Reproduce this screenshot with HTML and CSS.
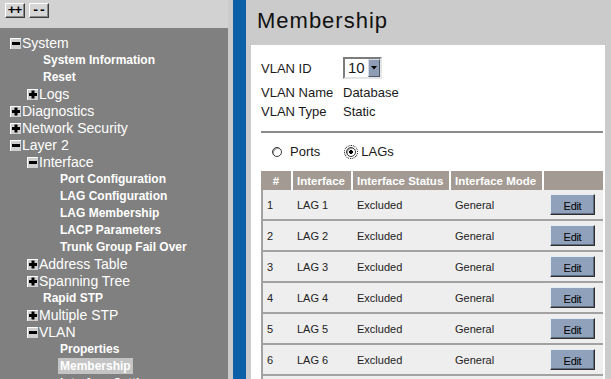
FILE: index.html
```html
<!DOCTYPE html>
<html>

<head>
  <title>Membership</title>
  <link rel="stylesheet" href="styles.css">
</head>

<body>
  <div class="frame">
    <div class="sidebar">
      <div class="toolbar">
        <button class="tool-btn">++</button>
        <button class="tool-btn">--</button>
      </div>
      <ul class="tree">
        <li class="node l0"><svg class="tog" width="11" height="11" viewBox="0 0 11 11"><rect width="11" height="11" fill="#cfcfcf"/><path d="M0.5 11V0.5H11" stroke="#fff" fill="none"/><rect x="2" y="4" width="8" height="3" fill="#000"/></svg>System</li>
        <li class="leaf l1">System Information</li>
        <li class="leaf l1">Reset</li>
        <li class="node l1"><svg class="tog" width="11" height="11" viewBox="0 0 11 11"><rect width="11" height="11" fill="#cfcfcf"/><path d="M0.5 11V0.5H11" stroke="#fff" fill="none"/><rect x="2" y="4" width="8" height="3" fill="#000"/><rect x="4.5" y="1.5" width="3" height="8" fill="#000"/></svg>Logs</li>
        <li class="node l0"><svg class="tog" width="11" height="11" viewBox="0 0 11 11"><rect width="11" height="11" fill="#cfcfcf"/><path d="M0.5 11V0.5H11" stroke="#fff" fill="none"/><rect x="2" y="4" width="8" height="3" fill="#000"/><rect x="4.5" y="1.5" width="3" height="8" fill="#000"/></svg>Diagnostics</li>
        <li class="node l0"><svg class="tog" width="11" height="11" viewBox="0 0 11 11"><rect width="11" height="11" fill="#cfcfcf"/><path d="M0.5 11V0.5H11" stroke="#fff" fill="none"/><rect x="2" y="4" width="8" height="3" fill="#000"/><rect x="4.5" y="1.5" width="3" height="8" fill="#000"/></svg>Network Security</li>
        <li class="node l0"><svg class="tog" width="11" height="11" viewBox="0 0 11 11"><rect width="11" height="11" fill="#cfcfcf"/><path d="M0.5 11V0.5H11" stroke="#fff" fill="none"/><rect x="2" y="4" width="8" height="3" fill="#000"/></svg>Layer 2</li>
        <li class="node l1"><svg class="tog" width="11" height="11" viewBox="0 0 11 11"><rect width="11" height="11" fill="#cfcfcf"/><path d="M0.5 11V0.5H11" stroke="#fff" fill="none"/><rect x="2" y="4" width="8" height="3" fill="#000"/></svg>Interface</li>
        <li class="leaf l2">Port Configuration</li>
        <li class="leaf l2">LAG Configuration</li>
        <li class="leaf l2">LAG Membership</li>
        <li class="leaf l2">LACP Parameters</li>
        <li class="leaf l2">Trunk Group Fail Over</li>
        <li class="node l1"><svg class="tog" width="11" height="11" viewBox="0 0 11 11"><rect width="11" height="11" fill="#cfcfcf"/><path d="M0.5 11V0.5H11" stroke="#fff" fill="none"/><rect x="2" y="4" width="8" height="3" fill="#000"/><rect x="4.5" y="1.5" width="3" height="8" fill="#000"/></svg>Address Table</li>
        <li class="node l1"><svg class="tog" width="11" height="11" viewBox="0 0 11 11"><rect width="11" height="11" fill="#cfcfcf"/><path d="M0.5 11V0.5H11" stroke="#fff" fill="none"/><rect x="2" y="4" width="8" height="3" fill="#000"/><rect x="4.5" y="1.5" width="3" height="8" fill="#000"/></svg>Spanning Tree</li>
        <li class="leaf l1">Rapid STP</li>
        <li class="node l1"><svg class="tog" width="11" height="11" viewBox="0 0 11 11"><rect width="11" height="11" fill="#cfcfcf"/><path d="M0.5 11V0.5H11" stroke="#fff" fill="none"/><rect x="2" y="4" width="8" height="3" fill="#000"/><rect x="4.5" y="1.5" width="3" height="8" fill="#000"/></svg>Multiple STP</li>
        <li class="node l1"><svg class="tog" width="11" height="11" viewBox="0 0 11 11"><rect width="11" height="11" fill="#cfcfcf"/><path d="M0.5 11V0.5H11" stroke="#fff" fill="none"/><rect x="2" y="4" width="8" height="3" fill="#000"/></svg>VLAN</li>
        <li class="leaf l2">Properties</li>
        <li class="leaf l2"><span class="current">Membership</span></li>
        <li class="leaf l2">Interface Settings</li>
      </ul>
    </div>

    <div class="divider"></div>

    <div class="main">
      <div class="page-head">
        <h1>Membership</h1>
      </div>
      <div class="content">
        <div class="vlan-form">
          <div class="field field-id">
            <span class="label">VLAN ID</span>
            <div class="select">
              <span class="select-val">10</span>
              <span class="select-btn"><svg width="6" height="4" viewBox="0 0 6 4"><path d="M0 0H6L3 3.5Z" fill="#000"/></svg></span>
            </div>
          </div>
          <div class="field">
            <span class="label">VLAN Name</span>
            <span>Database</span>
          </div>
          <div class="field">
            <span class="label">VLAN Type</span>
            <span>Static</span>
          </div>
        </div>

        <div class="rule"></div>

        <div class="radios">
          <span class="opt opt-ports"><span class="radio"></span>Ports</span>
          <span class="opt opt-lags"><span class="radio checked"></span>LAGs</span>
        </div>

        <table class="members">
          <colgroup>
            <col style="width:30px">
            <col style="width:60px">
            <col style="width:98px">
            <col style="width:93px">
            <col style="width:61px">
          </colgroup>
          <thead>
            <tr>
              <th class="num">#</th>
              <th>Interface</th>
              <th>Interface Status</th>
              <th>Interface Mode</th>
              <th></th>
            </tr>
          </thead>
          <tbody>
            <tr>
              <td>1</td>
              <td>LAG 1</td>
              <td>Excluded</td>
              <td>General</td>
              <td class="act"><button class="edit-btn">Edit</button></td>
            </tr>
            <tr>
              <td>2</td>
              <td>LAG 2</td>
              <td>Excluded</td>
              <td>General</td>
              <td class="act"><button class="edit-btn">Edit</button></td>
            </tr>
            <tr>
              <td>3</td>
              <td>LAG 3</td>
              <td>Excluded</td>
              <td>General</td>
              <td class="act"><button class="edit-btn">Edit</button></td>
            </tr>
            <tr>
              <td>4</td>
              <td>LAG 4</td>
              <td>Excluded</td>
              <td>General</td>
              <td class="act"><button class="edit-btn">Edit</button></td>
            </tr>
            <tr>
              <td>5</td>
              <td>LAG 5</td>
              <td>Excluded</td>
              <td>General</td>
              <td class="act"><button class="edit-btn">Edit</button></td>
            </tr>
            <tr>
              <td>6</td>
              <td>LAG 6</td>
              <td>Excluded</td>
              <td>General</td>
              <td class="act"><button class="edit-btn">Edit</button></td>
            </tr>
            <tr>
              <td></td>
              <td></td>
              <td></td>
              <td></td>
              <td></td>
            </tr>
          </tbody>
        </table>
      </div>
    </div>
  </div>
</body>

</html>
```

FILE: styles.css
```css
html,
body {
  margin: 0;
  padding: 0;
  height: 100%;
  overflow: hidden;
}

body {
  font-family: "Liberation Sans", Arial, sans-serif;
  color: #1a1a1a;
  background: #cbcbcb;
}

.frame {
  display: flex;
  height: 379px;
  width: 611px;
}

/* left tree */

.sidebar {
  width: 228px;
  display: flex;
  flex-direction: column;
  flex: none;
}

.toolbar {
  height: 28px;
  background: #d2d2d2;
  display: flex;
  align-items: flex-start;
  gap: 4px;
  padding: 3px 0 0 5px;
  box-sizing: border-box;
}

.tool-btn {
  width: 20px;
  height: 15px;
  padding: 0;
  font: bold 13px "Liberation Mono", monospace;
  line-height: 12px;
  letter-spacing: -1px;
  text-indent: -1px;
  color: #000;
  background: #d6d6d6;
  border: 1px solid;
  border-color: #fff #3c3c3c #3c3c3c #fff;
  box-shadow: inset -1px -1px #8a8a8a;
}

.tree {
  flex: 1;
  margin: 0;
  padding: 6px 0 0 0;
  list-style: none;
  background: #808080;
  overflow: hidden;
}

.tree li {
  height: 17px;
  display: flex;
  align-items: center;
  color: #fff;
  white-space: nowrap;
}

.tree .node {
  font-size: 14px;
}

.tree .leaf {
  font-size: 12px;
  font-weight: bold;
}

.tog {
  flex: none;
  margin: 1px 1px 0 0;
}

.node.l0 {
  padding-left: 10px;
}

.node.l1 {
  padding-left: 27px;
}

.leaf.l1 {
  padding-left: 43px;
}

.leaf.l2 {
  padding-left: 60px;
}

.current {
  background: #c4c4c4;
  padding: 1px 2px;
  margin-left: -2px;
}

/* blue separator */

.divider {
  flex: none;
  width: 13px;
  background: #0b60a8;
  border-left: 5px solid #cbcbcb;
  border-right: 5px solid #cbcbcb;
}

/* main page */

.main {
  flex: 1;
  display: flex;
  flex-direction: column;
  min-width: 0;
}

.page-head {
  height: 45px;
  flex: none;
  background: #cbcbcb;
  padding-left: 6px;
}

.page-head h1 {
  margin: 0;
  font-size: 22px;
  font-weight: normal;
  letter-spacing: 1px;
  line-height: 42px;
  color: #111;
}

.content {
  flex: 1;
  background: #fff;
  margin-right: 6px;
  padding: 12px 0 0 10px;
  overflow: hidden;
}

.vlan-form {
  font-size: 13px;
}

.field {
  display: flex;
  align-items: center;
  height: 19px;
}

.field-id {
  height: 22px;
  margin-bottom: 4px;
}

.label {
  width: 82px;
  flex: none;
}

.select {
  display: flex;
  width: 39px;
  height: 22px;
  box-sizing: border-box;
  border: 2px solid;
  border-color: #7c7c7c #e4e4e4 #e4e4e4 #7c7c7c;
  background: #fff;
}

.select-val {
  flex: 1;
  font-size: 15px;
  line-height: 18px;
  padding-left: 3px;
}

.select-btn {
  width: 12px;
  height: 18px;
  box-sizing: border-box;
  background: #8e9db4;
  border: 1px solid;
  border-color: #d4dbe6 #4d5666 #4d5666 #d4dbe6;
  display: flex;
  align-items: center;
  justify-content: center;
}

.rule {
  width: 342px;
  height: 2px;
  margin-top: 10px;
  background: #8a8a8a;
}

.radios {
  display: flex;
  align-items: center;
  height: 19px;
  margin-top: 9px;
  padding-left: 11px;
  font-size: 13px;
}

.opt {
  display: flex;
  align-items: center;
}

.opt-ports .radio {
  margin-right: 8px;
}

.opt-lags {
  margin-left: 26px;
}

.opt-lags .radio {
  margin-right: 5px;
}

.radio {
  width: 8px;
  height: 8px;
  border-radius: 50%;
  border: 1px solid #3a3a3a;
  background: #fff;
  box-shadow: inset 1px 1px #9a9a9a;
}

.radio.checked {
  background: radial-gradient(circle, #000 0 1.6px, #fff 2.2px);
  outline: 1px dotted #000;
  outline-offset: 1px;
}

/* membership table */

.members {
  margin-top: 10px;
  width: 342px;
  table-layout: fixed;
  border-collapse: separate;
  border-spacing: 0;
}

.members th {
  height: 19px;
  padding: 0 0 0 4px;
  background: #a39b93;
  color: #fff;
  font-size: 11.5px;
  font-weight: bold;
  text-align: left;
  border-left: 2px solid #fff;
  white-space: nowrap;
  overflow: hidden;
}

.members th:first-child {
  border-left: 0;
}

.members th.num {
  text-align: center;
  padding: 0;
}

.members td {
  height: 29px;
  padding: 0 0 0 6px;
  background: #eeeeee;
  font-size: 11px;
  color: #222;
  border-bottom: 2px solid #a2a2a2;
  white-space: nowrap;
}

.members td:first-child {
  border-left: 2px solid #a2a2a2;
  padding-left: 4px;
}

.members td.act {
  padding: 0 0 0 8px;
}

.edit-btn {
  width: 45px;
  height: 21px;
  padding: 3px 0 0 0;
  font: 11px "Liberation Sans", Arial, sans-serif;
  letter-spacing: -0.3px;
  color: #000;
  background: #8fa1bb;
  border: 1px solid;
  border-color: #e6ecf4 #2e2e2e #2e2e2e #e6ecf4;
  box-shadow: inset -1px -1px #5c6a80;
}
```
